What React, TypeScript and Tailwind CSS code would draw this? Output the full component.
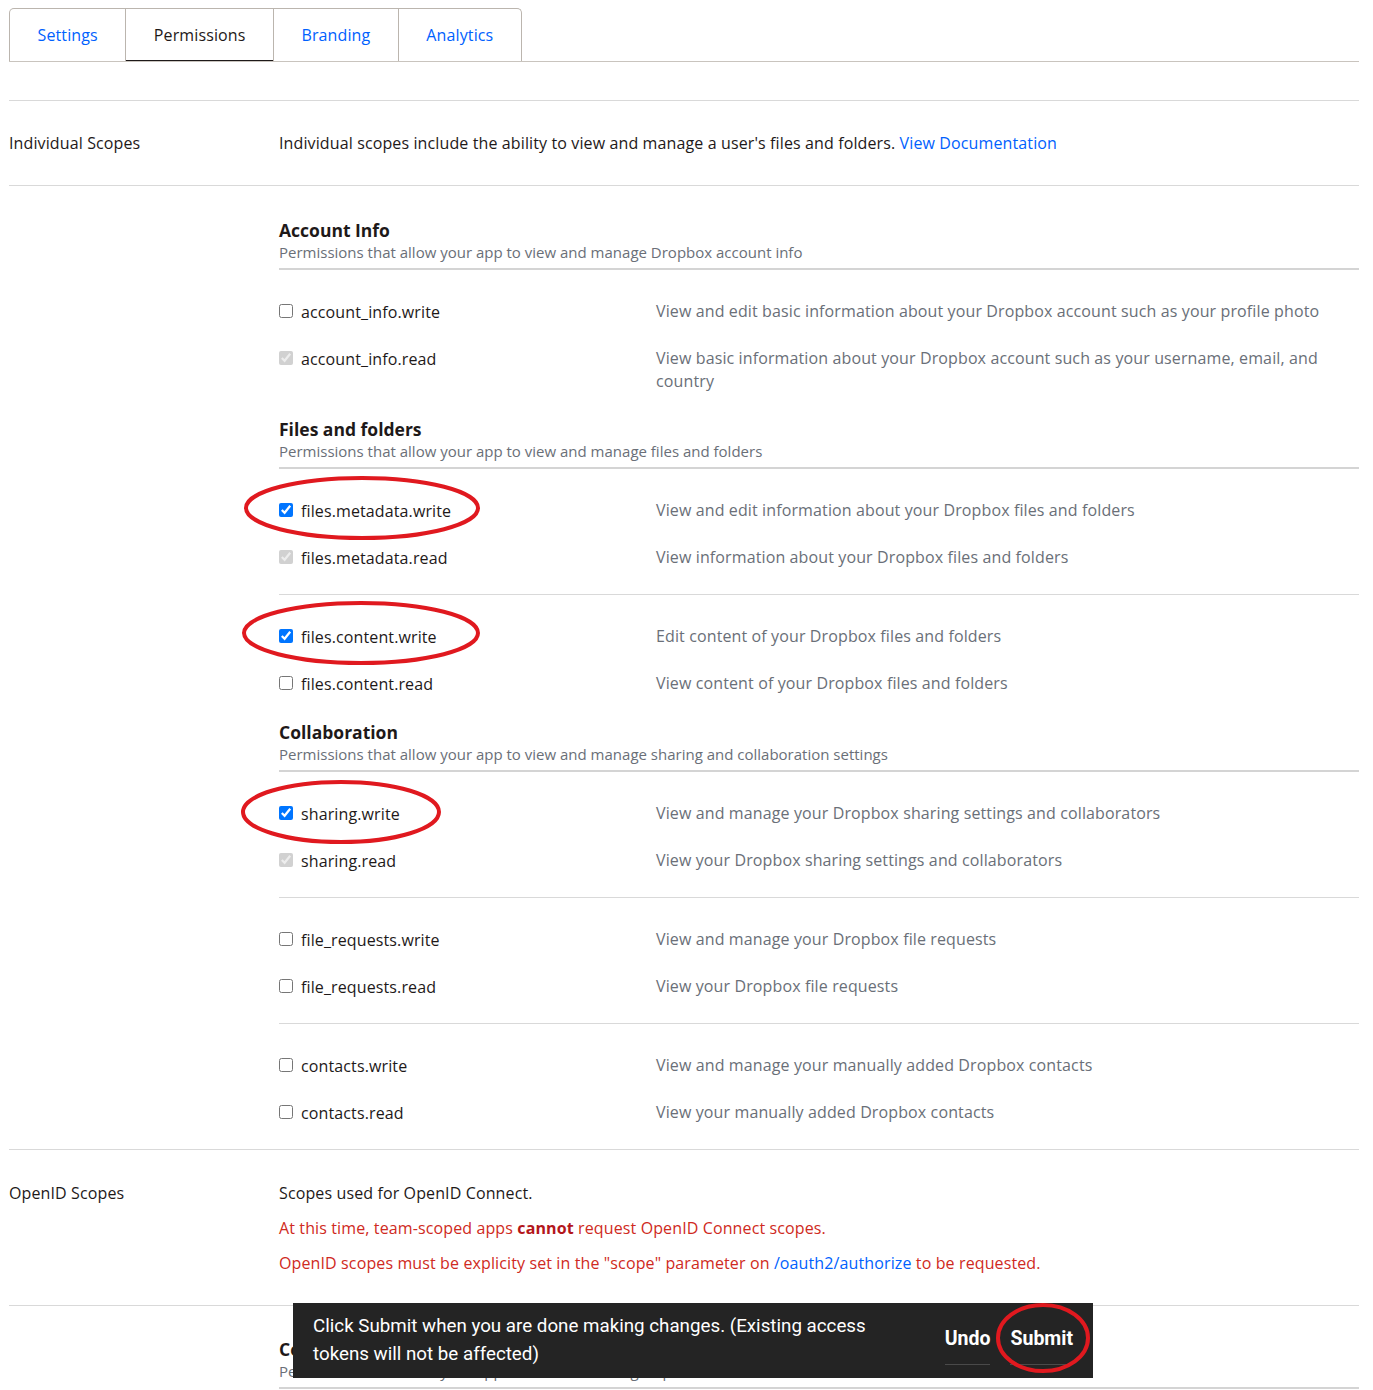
import React from "react";

type Scope = { name: string; desc: string; state: "off" | "on" | "locked" };

const font = { fontFamily: '"Open Sans", "Noto Sans", sans-serif' };

const cb = "m-0 mr-[8px] mt-[4px] h-[14px] w-[14px] shrink-0";

function Row({ s }: { s: Scope }) {
  return (
    <div className="flex items-start">
      <label className="flex w-[377px] shrink-0 items-start text-[16px] leading-6 tracking-[0.12px] text-[#1e1919]">
        {s.state === "off" && <input type="checkbox" className={cb} />}
        {s.state === "on" && <input type="checkbox" defaultChecked className={cb} />}
        {s.state === "locked" && <input type="checkbox" defaultChecked disabled className={cb} />}
        <span>{s.name}</span>
      </label>
      <div className="flex-1 text-[16px] leading-[23px] tracking-[0.12px] text-[#6a6f78]">{s.desc}</div>
    </div>
  );
}

function Group({ items, border }: { items: Scope[]; border?: boolean }) {
  return (
    <div className={"flex flex-col gap-[23px] pt-[30px] pb-[24px] " + (border ? "border-b border-[#d9d9d9]" : "")}>
      {items.map((s) => (
        <Row key={s.name} s={s} />
      ))}
    </div>
  );
}

function Heading({ title, sub }: { title: string; sub: string }) {
  return (
    <div className="border-b-2 border-[#d4d4d4] pb-[6px]">
      <div className="text-[17.5px] font-bold leading-6 text-[#1e1919]">{title}</div>
      <div className="text-[15px] leading-5 text-[#6a6f78]">{sub}</div>
    </div>
  );
}

export default function App() {
  const tabs = [
    { t: "Settings", active: false },
    { t: "Permissions", active: true },
    { t: "Branding", active: false },
    { t: "Analytics", active: false },
  ];
  return (
    <div className="relative min-h-[1390px] w-[1373px] overflow-hidden bg-white" style={font}>
      <div className="ml-[9px] w-[1350px] pt-2">
        {/* Tabs */}
        <div className="flex border-b border-[#c9c4be]">
          <div className="flex overflow-hidden rounded-t-[5px] border-l border-r border-t border-[#bbb5ae]">
            {tabs.map((tab, i) => (
              <div
                key={tab.t}
                className={
                  "relative px-[27.5px] pt-[14px] pb-[14px] text-[16px] leading-6 tracking-[0.12px] " +
                  (i > 0 ? "border-l border-[#bbb5ae] " : "") +
                  (tab.active ? "text-[#1e1919]" : "text-[#0061fe]")
                }
              >
                {tab.t}
                {tab.active && <div className="absolute bottom-[-1px] left-0 right-0 h-[2px] bg-[#1e1919]" />}
              </div>
            ))}
          </div>
        </div>

        {/* Individual scopes */}
        <div className="mt-[38px] border-t border-[#d9d9d9]">
          <div className="grid grid-cols-[270px_1fr] border-b border-[#d9d9d9] py-[30px] text-[16px] leading-6 tracking-[0.12px] text-[#1e1919]">
            <div>Individual Scopes</div>
            <div>
              Individual scopes include the ability to view and manage a user's files and folders.{" "}
              <span className="text-[#0061fe]">View Documentation</span>
            </div>
          </div>

          <div className="grid grid-cols-[270px_1fr] border-b border-[#d9d9d9]">
            <div />
            <div className="pt-[32px]">
              <Heading title="Account Info" sub="Permissions that allow your app to view and manage Dropbox account info" />
              <Group
                items={[
                  {
                    name: "account_info.write",
                    desc: "View and edit basic information about your Dropbox account such as your profile photo",
                    state: "off",
                  },
                  {
                    name: "account_info.read",
                    desc: "View basic information about your Dropbox account such as your username, email, and country",
                    state: "locked",
                  },
                ]}
              />
              <Heading title="Files and folders" sub="Permissions that allow your app to view and manage files and folders" />
              <Group
                border
                items={[
                  {
                    name: "files.metadata.write",
                    desc: "View and edit information about your Dropbox files and folders",
                    state: "on",
                  },
                  {
                    name: "files.metadata.read",
                    desc: "View information about your Dropbox files and folders",
                    state: "locked",
                  },
                ]}
              />
              <Group
                items={[
                  { name: "files.content.write", desc: "Edit content of your Dropbox files and folders", state: "on" },
                  { name: "files.content.read", desc: "View content of your Dropbox files and folders", state: "off" },
                ]}
              />
              <Heading
                title="Collaboration"
                sub="Permissions that allow your app to view and manage sharing and collaboration settings"
              />
              <Group
                border
                items={[
                  {
                    name: "sharing.write",
                    desc: "View and manage your Dropbox sharing settings and collaborators",
                    state: "on",
                  },
                  {
                    name: "sharing.read",
                    desc: "View your Dropbox sharing settings and collaborators",
                    state: "locked",
                  },
                ]}
              />
              <Group
                border
                items={[
                  { name: "file_requests.write", desc: "View and manage your Dropbox file requests", state: "off" },
                  { name: "file_requests.read", desc: "View your Dropbox file requests", state: "off" },
                ]}
              />
              <Group
                items={[
                  {
                    name: "contacts.write",
                    desc: "View and manage your manually added Dropbox contacts",
                    state: "off",
                  },
                  { name: "contacts.read", desc: "View your manually added Dropbox contacts", state: "off" },
                ]}
              />
            </div>
          </div>

          {/* OpenID */}
          <div className="grid grid-cols-[270px_1fr] border-b border-[#d9d9d9] pt-[31px] pb-[30px] text-[16px] leading-6 tracking-[0.12px]">
            <div className="text-[#1e1919]">OpenID Scopes</div>
            <div className="flex flex-col gap-[11px]">
              <div className="text-[#1e1919]">Scopes used for OpenID Connect.</div>
              <div className="text-[#cf2a22]">
                At this time, team-scoped apps <span className="font-bold text-[#b3161b]">cannot</span> request OpenID
                Connect scopes.
              </div>
              <div className="text-[#cf2a22]">
                OpenID scopes must be explicity set in the "scope" parameter on{" "}
                <span className="text-[#0061fe]">/oauth2/authorize</span> to be requested.
              </div>
            </div>
          </div>

          <div className="grid grid-cols-[270px_1fr]">
            <div />
            <div className="pt-[31px]">
              <Heading title="Connect" sub="Permissions that allow your app to view and manage OpenID Connect info" />
              <div className="h-10" />
            </div>
          </div>
        </div>
      </div>

      {/* Toast */}
      <div
        className="absolute left-[293px] top-[1303px] flex h-[75px] w-[800px] items-start justify-between bg-[#242424] px-5 py-[9px] text-white"
        style={{ fontFamily: 'Roboto, "Liberation Sans", sans-serif' }}
      >
        <div className="text-[18.75px] leading-[28px]">
          Click Submit when you are done making changes. (Existing access
          <br />
          tokens will not be affected)
        </div>
        <div className="flex gap-5 pt-[13px] text-[19.5px] font-bold leading-[28px]">
          <div className="border-b border-[#4a4a4a] pb-[11px]">Undo</div>
          <div className="border-b border-[#4a4a4a] pb-[11px]">Submit</div>
        </div>
      </div>

      {/* Annotation overlay */}
      <svg className="pointer-events-none absolute left-0 top-0" width="1373" height="1390" viewBox="0 0 1373 1390">
        <g fill="none" stroke="#e0191f" strokeWidth="4">
          <ellipse cx="362" cy="508" rx="116" ry="30" />
          <ellipse cx="361" cy="633" rx="117" ry="30" />
          <ellipse cx="341" cy="812" rx="98" ry="30" />
          <ellipse cx="1043" cy="1338" rx="45" ry="33" />
        </g>
      </svg>
    </div>
  );
}
